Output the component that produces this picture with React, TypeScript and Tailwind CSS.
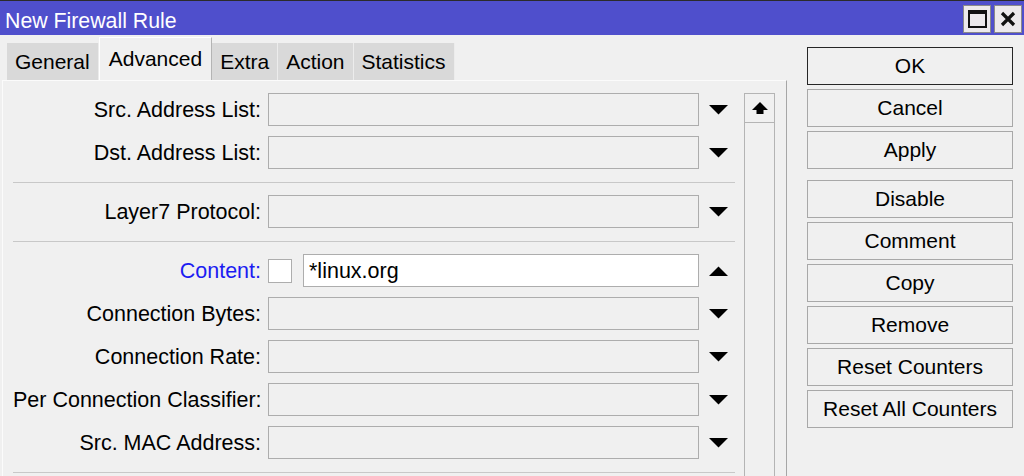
import React from "react";

function DownTri() {
  return (
    <svg width="19" height="10" viewBox="0 0 19 10" className="block">
      <polygon points="0,0 19,0 9.5,9.5" fill="#000" />
    </svg>
  );
}

function UpTri() {
  return (
    <svg width="19" height="10" viewBox="0 0 19 10" className="block">
      <polygon points="0,10 19,10 9.5,0.5" fill="#000" />
    </svg>
  );
}

function Row({ label, children }: { label: React.ReactNode; children: React.ReactNode }) {
  return (
    <div className="flex h-[33px] items-center">
      <div className="w-[248px] shrink-0 text-right text-[21.5px] leading-[24px] whitespace-nowrap">{label}</div>
      <div className="ml-[7px] flex h-full items-center">{children}</div>
    </div>
  );
}

function ComboRow({ label }: { label: string }) {
  return (
    <Row label={label}>
      <div className="h-[33px] w-[431px] border border-[#adadad] bg-[#f0f0f0]" />
      <div className="w-[36px] pl-[10px]">
        <DownTri />
      </div>
    </Row>
  );
}

function Sep() {
  return <div className="mt-[13px] mb-[12px] h-px bg-[#c8c8c8]" />;
}

function Btn({ children, primary }: { children: React.ReactNode; primary?: boolean }) {
  return (
    <div
      className={
        "flex h-[38px] items-center justify-center border bg-[#f0f0f0] leading-[24px] " +
        (primary ? "border-[#262626]" : "border-[#a8a8a8]")
      }
    >
      {children}
    </div>
  );
}

export default function App() {
  const tabs = ["General", "Advanced", "Extra", "Action", "Statistics"];
  return (
    <div className="h-[476px] w-[1024px] overflow-hidden bg-[#f0f0f0] font-['Liberation_Sans',Arial,sans-serif] text-[21px] text-[#000]">
      {/* title bar */}
      <div className="flex h-[35px] items-start justify-between border-t border-[#2b2b2b] bg-[#4f4fcc]">
        <span className="pl-[5px] pt-[8px] text-[21.3px] leading-[24px] text-white">New Firewall Rule</span>
        <div className="flex gap-[3px] pt-[4px] pr-[2px]">
          <div className="flex h-[28px] w-[28px] items-center justify-center border border-[#8a8a8a] bg-[#ece9ec]">
            <div className="h-[18px] w-[19px] border-2 border-t-[4px] border-[#111]" />
          </div>
          <div className="flex h-[28px] w-[28px] items-center justify-center border border-[#8a8a8a] bg-[#ece9ec]">
            <svg width="16" height="16" viewBox="0 0 16 16">
              <path d="M2 2 L14 14 M14 2 L2 14" stroke="#111" strokeWidth="3.2" />
            </svg>
          </div>
        </div>
      </div>

      <div className="flex">
        {/* tabs and panel */}
        <div className="flex w-[787px] flex-col">
          <div className="flex h-[45px] items-end pl-[7px]">
            {tabs.map((t) =>
              t === "Advanced" ? (
                <div
                  key={t}
                  className="flex h-[43px] items-center border-t border-l border-r border-t-white border-l-white border-r-[#b4b4b4] bg-[#f0f0f0] pl-[9px] pr-[9px] leading-[24px]"
                >
                  {t}
                </div>
              ) : (
                <div
                  key={t}
                  className="flex h-[37px] items-center border-r border-[#ececec] bg-[#d9d9d9] px-[8px] leading-[24px]"
                >
                  {t}
                </div>
              )
            )}
          </div>

          <div className="ml-[2px] flex h-[396px] border-t border-l border-r border-t-[#fbfbfb] border-l-[#fbfbfb] border-r-[#a6a6a6] pl-[10px]">
            {/* form */}
            <div className="w-[722px] pt-[12px]">
              <div className="flex flex-col gap-[10px]">
                <ComboRow label="Src. Address List:" />
                <ComboRow label="Dst. Address List:" />
              </div>
              <Sep />
              <ComboRow label="Layer7 Protocol:" />
              <Sep />
              <div className="flex flex-col gap-[10px]">
                <Row label={<span className="text-[#1c1cf2]">Content:</span>}>
                  <div className="h-[24px] w-[24px] border border-[#adadad] bg-white" />
                  <div className="ml-[11px] flex h-[33px] w-[396px] items-center border border-[#adadad] bg-white pl-[5px] text-[21.5px] leading-[24px]">
                    *linux.org
                  </div>
                  <div className="w-[36px] pl-[10px]">
                    <UpTri />
                  </div>
                </Row>
                <ComboRow label="Connection Bytes:" />
                <ComboRow label="Connection Rate:" />
                <ComboRow label="Per Connection Classifier:" />
                <ComboRow label="Src. MAC Address:" />
              </div>
              <Sep />
            </div>

            {/* scrollbar */}
            <div className="ml-[9px] mt-[12px] flex w-[31px] flex-col border-l border-r border-[#b4b4b4]">
              <div className="flex h-[30px] items-center justify-center border-t border-b border-[#b4b4b4]">
                <svg width="16" height="12" viewBox="0 0 16 12">
                  <polygon points="8,0 16,8 11.5,8 11.5,12 4.5,12 4.5,8 0,8" fill="#000" />
                </svg>
              </div>
              <div className="flex-1" />
            </div>
          </div>
        </div>

        {/* command buttons */}
        <div className="ml-[20px] flex w-[206px] flex-col pt-[12px]">
          <div className="flex flex-col gap-[4px]">
            <Btn primary>OK</Btn>
            <Btn>Cancel</Btn>
            <Btn>Apply</Btn>
          </div>
          <div className="mt-[11px] flex flex-col gap-[4px]">
            <Btn>Disable</Btn>
            <Btn>Comment</Btn>
            <Btn>Copy</Btn>
            <Btn>Remove</Btn>
            <Btn>Reset Counters</Btn>
            <Btn>Reset All Counters</Btn>
          </div>
        </div>
      </div>
    </div>
  );
}
